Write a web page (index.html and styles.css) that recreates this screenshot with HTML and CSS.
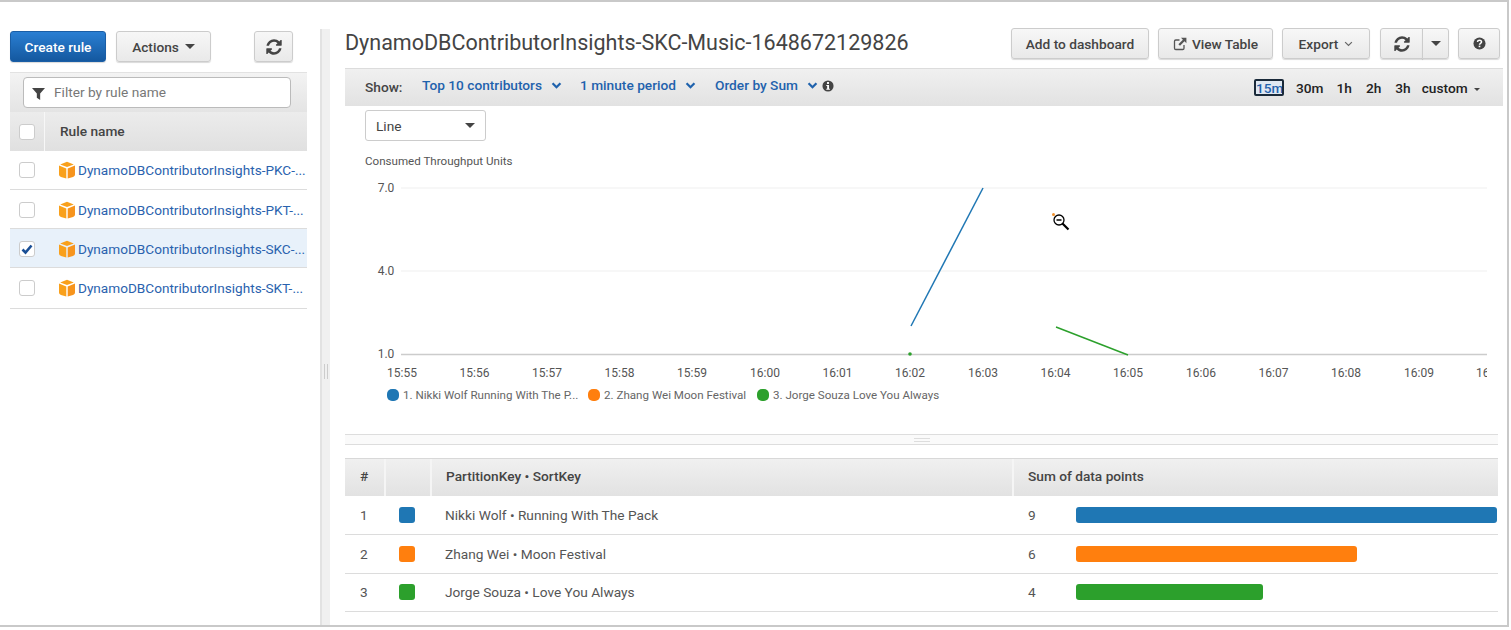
FILE: index.html
```html
<!DOCTYPE html>
<html lang="en">
<head>
    <meta charset="UTF-8">
    <title>CloudWatch Contributor Insights</title>
    <link rel="stylesheet" href="styles.css">
</head>
<body>
    <svg class="defs" width="0" height="0">
        <symbol id="refresh" viewBox="0 0 1792 1792">
            <path d="M1639 1056q0 5-1 7-64 268-268 434.5t-478 166.5q-146 0-282.5-55t-243.5-157l-129 129q-19 19-45 19t-45-19-19-45v-448q0-26 19-45t45-19h448q26 0 45 19t19 45-19 45l-137 137q71 66 161 102t187 36q134 0 250-65t186-179q11-17 53-117 8-23 30-23h192q13 0 22.5 9.5t9.5 22.5zm25-800v448q0 26-19 45t-45 19h-448q-26 0-45-19t-19-45 19-45l138-138q-148-137-349-137-134 0-250 65t-186 179q-11 17-53 117-8 23-30 23h-199q-13 0-22.5-9.5t-9.5-22.5v-7q65-268 270-434.5t480-166.5q146 0 284 55.5t245 156.5l130-129q19-19 45-19t45 19 19 45z"/>
        </symbol>
        <symbol id="cube" viewBox="0 0 18 18">
            <path fill="#f9a01b" d="M1 4.6 8.3 7.4V17.4L3 15.9C1.8 15.5 1 14.6 1 13.4Z"/>
            <path fill="#f7941d" d="M17 4.6 9.7 7.4V17.4L15 15.9C16.2 15.5 17 14.6 17 13.4Z"/>
            <path fill="#f9a01b" d="M9 .8 15.8 3.4 9 6 2.2 3.4Z"/>
        </symbol>
        <symbol id="chevron" viewBox="0 0 12 8">
            <path d="M1.5 1.5 6 6l4.5-4.5" fill="none" stroke="currentColor"/>
        </symbol>
    </svg>

    <div class="frame">
        <aside class="left">
            <div class="toolbar">
                <button class="btn btn-primary btn-create">Create rule</button>
                <button class="btn btn-actions">Actions <span class="caret"></span></button>
                <button class="btn btn-refresh"><svg class="icon-refresh"><use href="#refresh"/></svg></button>
            </div>
            <div class="filter-bar">
                <div class="filter-input">
                    <svg class="icon-filter" viewBox="0 0 14 14"><path d="M0 1H14L8.8 7V14L5.2 11.5V7Z"/></svg>
                    <span>Filter by rule name</span>
                </div>
            </div>
            <div class="rule-head">
                <div class="check-cell"><span class="checkbox"></span></div>
                <div class="rule-head-name">Rule name</div>
            </div>
            <div class="rule-row">
                <div class="check-cell"><span class="checkbox"></span></div>
                <svg class="icon-cube"><use href="#cube"/></svg>
                <a class="rule-link">DynamoDBContributorInsights-PKC-...</a>
            </div>
            <div class="rule-row row-second">
                <div class="check-cell"><span class="checkbox"></span></div>
                <svg class="icon-cube"><use href="#cube"/></svg>
                <a class="rule-link">DynamoDBContributorInsights-PKT-...</a>
            </div>
            <div class="rule-row selected">
                <div class="check-cell">
                    <span class="checkbox">
                        <svg viewBox="0 0 14 14"><path d="M2.5 7.5 5.5 10.5 11.5 3.5" fill="none" stroke="#1a4f96" stroke-width="2.6"/></svg>
                    </span>
                </div>
                <svg class="icon-cube"><use href="#cube"/></svg>
                <a class="rule-link">DynamoDBContributorInsights-SKC-...</a>
            </div>
            <div class="rule-row row-last">
                <div class="check-cell"><span class="checkbox"></span></div>
                <svg class="icon-cube"><use href="#cube"/></svg>
                <a class="rule-link">DynamoDBContributorInsights-SKT-...</a>
            </div>
        </aside>

        <div class="splitter"><span class="grip"></span></div>

        <main class="right">
            <header class="title-row">
                <h1>DynamoDBContributorInsights-SKC-Music-1648672129826</h1>
                <div class="title-actions">
                    <button class="btn btn-add">Add to dashboard</button>
                    <button class="btn btn-view">
                        <svg class="icon-ext" viewBox="0 0 14 14">
                            <path d="M11 8v3.2A1.3 1.3 0 0 1 9.700 12.500H2.800A1.300 1.300 0 0 1 1.500 11.200V4.300A1.300 1.300 0 0 1 2.800 3H6.500" fill="none" stroke="#555" stroke-width="1.300"/>
                            <path d="M8 .8H13.400V6.200L11.500 4.300 7 8.800 5.400 7.200 9.900 2.700Z" fill="#555"/>
                        </svg>
                        View Table
                    </button>
                    <button class="btn btn-export">Export <svg class="icon-thin"><use href="#chevron"/></svg></button>
                    <div class="btn-group">
                        <button class="btn btn-group-main"><svg class="icon-refresh"><use href="#refresh"/></svg></button>
                        <button class="btn btn-group-caret"><span class="caret"></span></button>
                    </div>
                    <button class="btn btn-help">
                        <svg class="icon-help" viewBox="0 0 14 14">
                            <circle cx="7" cy="7" r="6.500" fill="#444"/>
                            <path d="M4.800 5.400C4.900 4.100 5.900 3.500 7 3.500 8.200 3.500 9.200 4.200 9.200 5.400 9.200 6.900 7 6.900 7 8.300" fill="none" stroke="#fff" stroke-width="1.600"/>
                            <rect x="6.100" y="9.300" width="1.800" height="1.700" fill="#fff"/>
                        </svg>
                    </button>
                </div>
            </header>

            <div class="show-bar">
                <span class="show-label">Show:</span>
                <a class="show-link link-top">Top 10 contributors <svg class="icon-chev"><use href="#chevron"/></svg></a>
                <a class="show-link link-period">1 minute period <svg class="icon-chev"><use href="#chevron"/></svg></a>
                <a class="show-link link-order">Order by Sum <svg class="icon-chev"><use href="#chevron"/></svg></a>
                <svg class="icon-info" viewBox="0 0 14 14">
                    <circle cx="7" cy="7" r="6.500" fill="#444"/>
                    <rect x="5.800" y="2.400" width="2.400" height="2.200" fill="#fff"/>
                    <path d="M5 5.800H8.200V10.200H9.200V11.500H5V10.200H6V7.100H5Z" fill="#fff"/>
                </svg>
                <div class="ranges">
                    <span class="range active">15m</span>
                    <span class="range r30">30m</span>
                    <span class="range r1">1h</span>
                    <span class="range r2">2h</span>
                    <span class="range r3">3h</span>
                    <span class="range custom">custom <span class="caret caret-small"></span></span>
                </div>
            </div>

            <div class="select-line">Line <span class="caret"></span></div>
            <div class="chart-title">Consumed Throughput Units</div>

            <div class="chart">
                <!-- chart canvas, x and y are plot coordinates -->
                <svg class="chart-svg" viewBox="0 0 1158 218" width="1158" height="218">
                    <g class="grid">
                        <line x1="56" y1="8" x2="1142" y2="8"/>
                        <line x1="56" y1="91" x2="1142" y2="91"/>
                    </g>
                    <line class="axis" x1="56" y1="174.500" x2="1142" y2="174.500"/>
                    <g class="y-labels">
                        <text x="41" y="12">7.0</text>
                        <text x="41" y="95">4.0</text>
                        <text x="41" y="178">1.0</text>
                    </g>
                    <g class="x-labels">
                        <text x="57" y="197">15:55</text>
                        <text x="129.500" y="197">15:56</text>
                        <text x="202" y="197">15:57</text>
                        <text x="274.500" y="197">15:58</text>
                        <text x="347" y="197">15:59</text>
                        <text x="420" y="197">16:00</text>
                        <text x="492.500" y="197">16:01</text>
                        <text x="565" y="197">16:02</text>
                        <text x="638" y="197">16:03</text>
                        <text x="710.500" y="197">16:04</text>
                        <text x="783" y="197">16:05</text>
                        <text x="856" y="197">16:06</text>
                        <text x="928.500" y="197">16:07</text>
                        <text x="1001" y="197">16:08</text>
                        <text x="1074" y="197">16:09</text>
                        <svg x="1100" y="180" width="42" height="30">
                            <text x="46" y="17">16:10</text>
                        </svg>
                    </g>
                    <line x1="566" y1="146" x2="638" y2="8" stroke="#1f77b4" stroke-width="1.500"/>
                    <line x1="711" y1="147" x2="783" y2="175" stroke="#2ca02c" stroke-width="1.500"/>
                    <circle cx="565" cy="174" r="1.800" fill="#2ca02c"/>
                </svg>
                <svg class="zoom-cursor" viewBox="0 0 18 18">
                    <circle cx="1.500" cy="1.500" r="1.500" fill="#f0902c"/>
                    <circle cx="7" cy="7" r="5" fill="#fff" stroke="#000" stroke-width="1.300"/>
                    <path d="M4.500 7H9.500" stroke="#000" stroke-width="1.500"/>
                    <path d="M10.500 10.500 16.500 16.500" stroke="#000" stroke-width="2.200"/>
                </svg>
            </div>

            <div class="legend">
                <span class="legend-item item-1"><i class="dot blue"></i>1. Nikki Wolf Running With The P...</span>
                <span class="legend-item item-2"><i class="dot orange"></i>2. Zhang Wei Moon Festival</span>
                <span class="legend-item item-3"><i class="dot green"></i>3. Jorge Souza Love You Always</span>
            </div>

            <div class="resizer"><span class="resizer-grip"></span></div>

            <div class="table">
                <div class="t-row t-head">
                    <div class="c-num">#</div>
                    <div class="c-swatch"></div>
                    <div class="c-key">PartitionKey • SortKey</div>
                    <div class="c-sum">Sum of data points</div>
                </div>
                <div class="t-row">
                    <div class="c-num">1</div>
                    <div class="c-swatch"><i class="swatch blue"></i></div>
                    <div class="c-key">Nikki Wolf • Running With The Pack</div>
                    <div class="c-sum"><span class="sum-val">9</span><div class="bar blue" style="width:421px"></div></div>
                </div>
                <div class="t-row row-2">
                    <div class="c-num">2</div>
                    <div class="c-swatch"><i class="swatch orange"></i></div>
                    <div class="c-key">Zhang Wei • Moon Festival</div>
                    <div class="c-sum"><span class="sum-val">6</span><div class="bar orange" style="width:281px"></div></div>
                </div>
                <div class="t-row">
                    <div class="c-num">3</div>
                    <div class="c-swatch"><i class="swatch green"></i></div>
                    <div class="c-key">Jorge Souza • Love You Always</div>
                    <div class="c-sum"><span class="sum-val">4</span><div class="bar green" style="width:187px"></div></div>
                </div>
            </div>
        </main>
    </div>
</body>
</html>
```

FILE: styles.css
```css
html, body {
    margin: 0;
    padding: 0;
    background-color: #fff;
    overflow: hidden;
}
body {
    font-family: Roboto, "Liberation Sans", Arial, sans-serif;
    color: #444;
    font-size: 13.7px;
}
.defs {
    position: absolute;
}
.frame {
    box-sizing: border-box;
    width: 1509px;
    height: 627px;
    border-top: 2px solid #c9c9c9;
    border-right: 2px solid #c9c9c9;
    border-bottom: 2px solid #c9c9c9;
    display: flex;
    align-items: flex-start;
    padding-left: 10px;
    overflow: hidden;
}

/* buttons */
.btn {
    box-sizing: border-box;
    height: 31px;
    margin: 0;
    padding: 0;
    font-family: inherit;
    font-size: 13.7px;
    font-weight: 500;
    color: #444;
    background: linear-gradient(#f7f7f7, #e9e9e9);
    border: 1px solid #ccc;
    border-radius: 3px;
    box-shadow: 0 1px 1px rgba(0, 0, 0, 0.15);
    display: flex;
    align-items: center;
    justify-content: center;
}
.btn-primary {
    color: #fff;
    background: linear-gradient(#2a7fd3, #14589f);
    border-color: #1a5ea6;
}
.caret {
    display: inline-block;
    width: 0;
    height: 0;
    border-left: 5px solid transparent;
    border-right: 5px solid transparent;
    border-top: 5px solid #444;
}
.caret-small {
    border-left-width: 3.5px;
    border-right-width: 3.5px;
    border-top-width: 3px;
    margin-left: 3px;
    vertical-align: 2px;
}
.icon-refresh {
    width: 18px;
    height: 18px;
    fill: #444;
}

/* left panel */
.left {
    width: 297px;
    flex-shrink: 0;
    padding-top: 29px;
}
.toolbar {
    display: flex;
    margin-bottom: 10px;
}
.btn-create {
    width: 96px;
}
.btn-actions {
    width: 95px;
    margin-left: 10px;
    gap: 6px;
}
.btn-refresh {
    width: 39px;
    margin-left: 43px;
}
.filter-bar {
    box-sizing: border-box;
    height: 40px;
    padding: 5px 0 0 13px;
    background: linear-gradient(#f3f3f3, #e4e4e4);
    border-top: 1px solid #e2e2e2;
}
.filter-input {
    box-sizing: border-box;
    width: 268px;
    height: 31px;
    margin-top: -1px;
    padding-bottom: 1px;
    background-color: #fff;
    border: 1px solid #bbb;
    border-radius: 4px;
    display: flex;
    align-items: center;
    color: #777;
}
.icon-filter {
    width: 13px;
    height: 13px;
    margin: 2px 9px 0 8px;
    fill: #444;
}
.rule-head {
    box-sizing: border-box;
    height: 39px;
    display: flex;
    align-items: center;
    background: linear-gradient(#ececec, #e0e0e0);
    font-weight: 500;
    color: #444;
}
.check-cell {
    box-sizing: border-box;
    width: 35px;
    height: 100%;
    flex-shrink: 0;
    display: flex;
    align-items: center;
    padding-left: 9px;
}
.rule-head .check-cell {
    border-right: 1px solid #f7f7f7;
}
.rule-head-name {
    margin-left: 15px;
    margin-top: -2px;
}
.checkbox {
    box-sizing: border-box;
    width: 16px;
    height: 16px;
    background-color: #fff;
    border: 1px solid #ccc;
    border-radius: 3px;
    display: block;
}
.checkbox svg {
    display: block;
    width: 14px;
    height: 14px;
}
.rule-row {
    box-sizing: border-box;
    height: 39px;
    display: flex;
    align-items: center;
    border-bottom: 1px solid #dcdcdc;
}
.row-second {
    padding-top: 1px;
}
.row-last {
    height: 41px;
    padding-bottom: 1px;
}
.rule-row.selected {
    padding-top: 1px;
    background-color: #e8f1fa;
}
.icon-cube {
    width: 18px;
    height: 18px;
    margin: 0 2px 0 13px;
    flex-shrink: 0;
}
.rule-link {
    color: #2a62ae;
    font-size: 13.6px;
    white-space: nowrap;
}

/* splitter */
.splitter {
    box-sizing: border-box;
    width: 10px;
    height: 597px;
    margin: 27px 15px 0 13px;
    flex-shrink: 0;
    background-color: #f0f0f0;
    border-left: 2px solid #e2e2e2;
    display: flex;
    justify-content: center;
    padding-top: 335px;
}
.grip {
    box-sizing: border-box;
    width: 4px;
    height: 15px;
    border-left: 1px solid #ccc;
    border-right: 1px solid #ccc;
}

/* right panel */
.right {
    width: 1158px;
    flex-shrink: 0;
    padding-top: 26px;
}
.title-row {
    height: 31px;
    display: flex;
    align-items: center;
    justify-content: space-between;
    margin-bottom: 9px;
}
h1 {
    margin: 0;
    padding-bottom: 2px;
    font-size: 21.5px;
    font-weight: 400;
    color: #444;
    white-space: nowrap;
}
.title-actions {
    display: flex;
    padding-right: 3px;
}
.btn-add {
    width: 138px;
}
.btn-view {
    width: 115px;
    margin-left: 9px;
    gap: 5px;
}
.icon-ext {
    width: 14px;
    height: 14px;
}
.btn-export {
    width: 88px;
    margin-left: 9px;
    gap: 6px;
}
.icon-thin {
    width: 9px;
    height: 6px;
    color: #666;
    stroke-width: 1.600;
}
.btn-group {
    display: flex;
    margin-left: 10px;
}
.btn-group-main {
    width: 43px;
    border-radius: 3px 0 0 3px;
}
.btn-group-caret {
    width: 27px;
    margin-left: -1px;
    border-radius: 0 3px 3px 0;
}
.btn-help {
    width: 42px;
    margin-left: 9px;
}
.icon-help {
    width: 13px;
    height: 13px;
}
.show-bar {
    box-sizing: border-box;
    width: 1158px;
    height: 38px;
    padding-left: 20px;
    display: flex;
    align-items: center;
    background: linear-gradient(#f0f0f0, #e2e2e2);
    border-top: 1px solid #dcdcdc;
    font-weight: 500;
}
.show-label {
    width: 57px;
    color: #444;
    margin-top: -1px;
}
.show-link {
    color: #1f62ad;
    display: flex;
    align-items: center;
    margin-top: -6px;
    white-space: nowrap;
}
.link-period {
    margin-left: 18px;
}
.link-order {
    margin-left: 19px;
}
.icon-chev {
    width: 11px;
    height: 7px;
    margin-left: 9px;
    margin-top: 2px;
    color: #1f62ad;
    stroke-width: 2.600;
}
.icon-info {
    width: 12px;
    height: 12px;
    margin-left: 4px;
    margin-top: -4px;
}
.ranges {
    margin-left: auto;
    padding-right: 23px;
    display: flex;
    align-items: center;
    color: #222;
    font-weight: 500;
}
.range.active {
    box-sizing: border-box;
    width: 30px;
    height: 17px;
    line-height: 15px;
    text-align: center;
    overflow: hidden;
    color: #1f62ad;
    background-color: #dfe8f2;
    border: 2px solid #1a2a3a;
    border-radius: 2px;
}
.r30 {
    margin-left: 12px;
}
.r1 {
    margin-left: 13px;
}
.r2, .r3 {
    margin-left: 14px;
}
.custom {
    margin-left: 11px;
}
.select-line {
    box-sizing: border-box;
    width: 121px;
    height: 31px;
    margin: 4px 0 0 20px;
    padding: 0 10px;
    display: flex;
    align-items: center;
    justify-content: space-between;
    background-color: #fff;
    border: 1px solid #ccc;
    border-radius: 3px;
    color: #444;
}
.chart-title {
    margin: 14px 0 0 20px;
    font-size: 11.6px;
    line-height: 13px;
    color: #555;
}
.chart {
    position: relative;
    height: 218px;
    margin-top: 12px;
}
.chart-svg {
    display: block;
    font-family: Roboto, "Liberation Sans", Arial, sans-serif;
    font-size: 12px;
}
.grid line {
    stroke: #efefef;
    stroke-width: 1;
}
.axis {
    stroke: #ccc;
    stroke-width: 1.500;
}
.y-labels text {
    fill: #555;
    text-anchor: middle;
}
.x-labels text {
    fill: #555;
    text-anchor: middle;
}
.zoom-cursor {
    position: absolute;
    left: 707px;
    top: 33px;
    width: 18px;
    height: 18px;
}
.legend {
    display: flex;
    height: 20px;
    margin-left: 42px;
    margin-top: -13px;
    font-size: 11.6px;
    line-height: 20px;
    color: #666;
}
.legend-item {
    display: flex;
    align-items: center;
    white-space: nowrap;
}
.item-1 {
    width: 201px;
}
.item-2 {
    width: 169px;
}
.dot {
    width: 12px;
    height: 12px;
    border-radius: 5px;
    margin-right: 4px;
}
.blue {
    background-color: #1f77b4;
}
.orange {
    background-color: #ff7f0e;
}
.green {
    background-color: #2ca02c;
}
.resizer {
    box-sizing: border-box;
    width: 1153px;
    height: 11px;
    margin-top: 29px;
    background-color: #fafafa;
    border-top: 1px solid #ddd;
    border-bottom: 1px solid #ddd;
    display: flex;
    justify-content: center;
    align-items: center;
}
.resizer-grip {
    box-sizing: border-box;
    width: 16px;
    height: 4px;
    margin-left: 1px;
    border-top: 1px solid #ddd;
    border-bottom: 1px solid #ddd;
}
.table {
    width: 1153px;
    margin-top: 13px;
}
.t-row {
    box-sizing: border-box;
    height: 38.500px;
    display: flex;
    align-items: center;
    border-bottom: 1px solid #dcdcdc;
    color: #555;
}
.row-2 {
    height: 39px;
}
.t-head {
    height: 38px;
    background: linear-gradient(#f0f0f0, #e2e2e2);
    border-top: 1px solid #d8d8d8;
    border-bottom: 0;
    font-weight: 500;
    color: #444;
}
.t-head > div {
    height: 100%;
    padding-bottom: 3px;
    display: flex;
    align-items: center;
    border-right: 2px solid #f5f5f5;
    box-sizing: border-box;
}
.t-head > div:last-child {
    border-right: 0;
}
.c-num {
    width: 39px;
    padding-left: 15px;
    box-sizing: border-box;
    flex-shrink: 0;
}
.t-head .c-num {
    width: 41px;
}
.c-swatch {
    width: 46px;
    flex-shrink: 0;
    padding-left: 15px;
    box-sizing: border-box;
}
.c-key {
    width: 582px;
    flex-shrink: 0;
    padding-left: 15px;
    box-sizing: border-box;
}
.t-head .c-key {
    padding-left: 14px;
}
.c-sum {
    flex: 1;
    display: flex;
    align-items: center;
    padding-left: 16px;
    box-sizing: border-box;
}
.t-head .c-sum {
    padding-left: 14px;
}
.swatch {
    display: block;
    width: 16px;
    height: 16px;
    border-radius: 3px;
}
.sum-val {
    width: 48px;
}
.bar {
    height: 16px;
    border-radius: 3px;
}
```
